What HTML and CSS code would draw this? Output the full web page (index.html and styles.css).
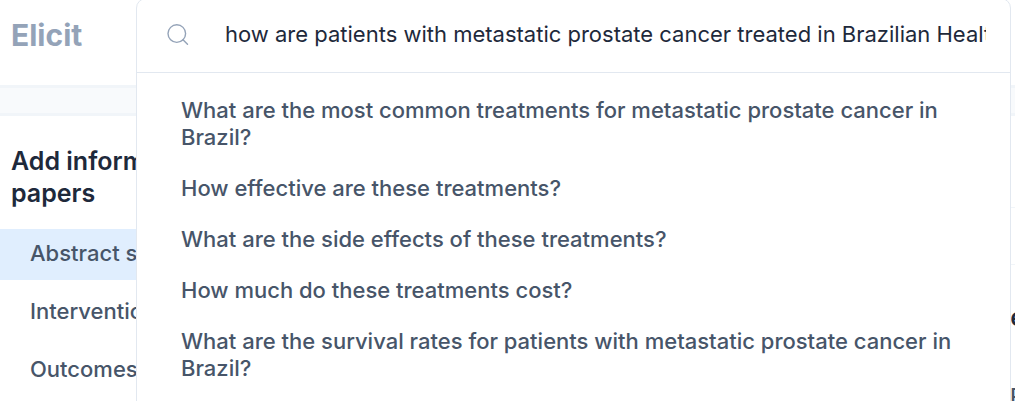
FILE: index.html
```html
<!DOCTYPE html>
<html lang="en">
<head>
<meta charset="utf-8">
<title>Elicit</title>
<link rel="stylesheet" href="styles.css">
</head>
<body>
<div class="app">
  <header class="header"><a class="logo" href="#">Elicit</a></header>
  <div class="toolbar"></div>
  <div class="content">
    <aside class="sidebar">
      <h2 class="sidebar-title">Add information about papers</h2>
      <nav class="fields">
        <button class="field selected" type="button">Abstract summary</button>
        <button class="field" type="button">Intervention</button>
        <button class="field" type="button">Outcomes measured</button>
      </nav>
    </aside>
    <main class="results">
      <div class="results-space"></div>
      <div class="results-row"></div>
      <article class="paper">
        <h3 class="paper-title">e</h3>
        <p class="paper-text">P</p>
      </article>
    </main>
  </div>
</div>
<section class="search">
  <form class="search-bar">
    <svg class="search-icon" viewBox="0 0 24 24" aria-hidden="true"><circle cx="10.8" cy="11.6" r="8.8"/><path d="M17 17.8l4.5 4.5"/></svg>
    <input class="search-input" type="text" aria-label="Ask a research question" value="how are patients with metastatic prostate cancer treated in Brazilian Health System">
  </form>
  <div class="suggestions">
    <button class="suggestion" type="button">What are the most common treatments for metastatic prostate cancer in Brazil?</button>
    <button class="suggestion" type="button">How effective are these treatments?</button>
    <button class="suggestion" type="button">What are the side effects of these treatments?</button>
    <button class="suggestion" type="button">How much do these treatments cost?</button>
    <button class="suggestion" type="button">What are the survival rates for patients with metastatic prostate cancer in Brazil?</button>
  </div>
</section>
</body>
</html>
```
FILE: styles.css
```css
* { box-sizing: border-box; }
body {
  margin: 0;
  overflow: hidden;
  background: #fff;
  color: #475569;
  font-family: Inter, "Liberation Sans", sans-serif;
  font-size: 22px;
  font-weight: 500;
}
button, input { font: inherit; color: inherit; border: 0; background: none; padding: 0; }
button { text-align: left; cursor: pointer; }
.app { min-height: 100vh; }
.header { display: flex; align-items: center; height: 85px; padding: 0 11px 16px; }
.logo { color: #94a3b8; font-size: 30px; font-weight: 700; line-height: 40px; text-decoration: none; }
.toolbar { height: 31px; background: #f8fafc; border: solid #f1f5f9; border-width: 3px 0; }
.content { display: flex; }
.sidebar { flex: 0 0 320px; }
.sidebar-title { margin: 0; padding: 29px 11px 20px; color: #1e293b; font-size: 25px; font-weight: 600; line-height: 32px; }
.fields { display: flex; flex-direction: column; gap: 7px; }
.field { padding: 9px 30px 12px; line-height: 30px; }
.field.selected { background: #e0eefe; }
.results { flex: 1; min-width: 0; text-align: right; }
.results-space { height: 92px; border-bottom: 1px solid #f1f5f9; }
.results-row { height: 57px; border-bottom: 1px solid #f1f5f9; }
.paper { margin-right: -10px; padding-top: 36px; }
.paper-title { margin: 0; color: #1e293b; font-size: 25px; font-weight: 600; line-height: 32px; }
.paper-text { margin: 48px 0 0; padding-right: 1px; line-height: 30px; }
.search {
  position: absolute;
  top: -2px;
  left: 136px;
  right: 4px;
  min-height: calc(100vh + 20px);
  background: #fff;
  border: 1px solid #e2e8f0;
  border-radius: 10px;
}
.search-bar { display: flex; align-items: center; gap: 35px; padding: 18px 24px 22px 29px; border-bottom: 1px solid #e2e8f0; }
.search-icon { flex: none; width: 24px; height: 24px; overflow: visible; fill: none; stroke: #94a3b8; stroke-width: 1.4; stroke-linecap: round; }
.search-input { flex: 1; min-width: 0; height: 33px; color: #1e293b; font-weight: 400; outline: 0; }
.suggestions { display: flex; flex-direction: column; padding: 12px 32px; }
.suggestion { padding: 12px; line-height: 27px; }
```
